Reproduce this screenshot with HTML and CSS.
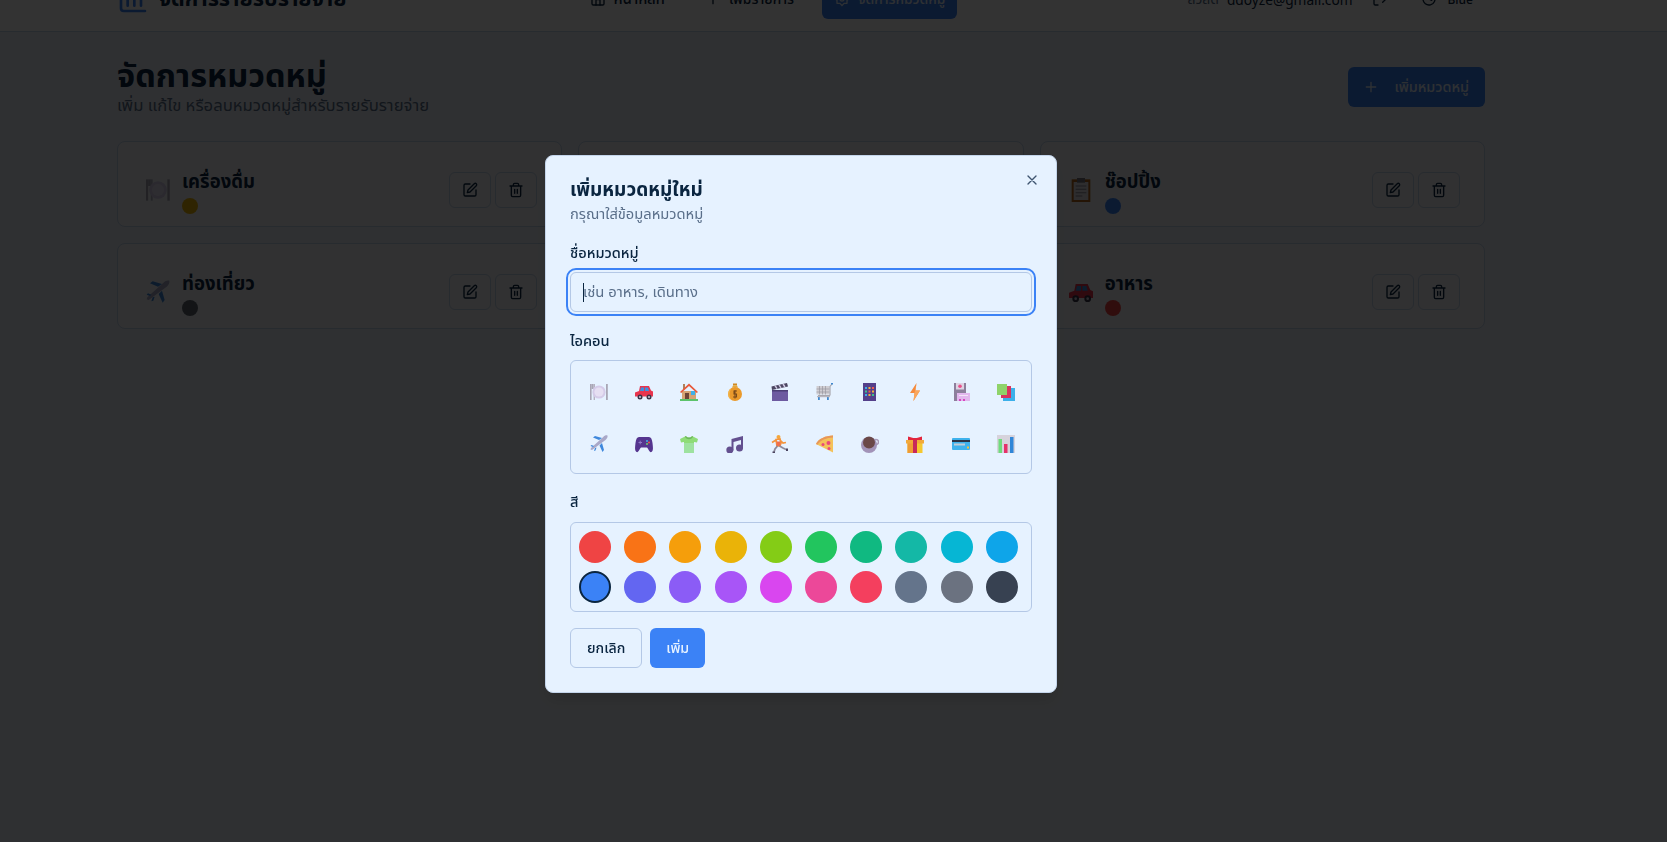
FILE: index.html
```html
<!DOCTYPE html>
<html lang="th">
<head>
    <meta charset="UTF-8">
    <meta name="viewport" content="width=device-width, initial-scale=1.0">
    <title>จัดการหมวดหมู่</title>
    <link rel="stylesheet" href="styles.css">
</head>
<body>

<!-- emoji set, reused in the cards and in the picker -->
<svg class="sprites" xmlns="http://www.w3.org/2000/svg">
    <symbol id="e-plate" viewBox="0 0 18 18">
        <rect x="0" y="1" width="1.6" height="16" fill="#a9a6b5"/><rect x="1.6" y="1" width="2" height="5" fill="#a9a6b5"/><rect x="3.6" y="1" width="1.4" height="16" fill="#b5b2c0"/>
        <rect x="16" y="1" width="1.8" height="16" fill="#a9a6b5"/>
        <circle cx="9" cy="9" r="6.6" fill="#d5cbe8"/><circle cx="9" cy="9" r="4.6" fill="#e6dff2"/>
    </symbol>
    <symbol id="e-car" viewBox="0 0 18 18">
        <path d="M5 3h9l2 4.500 2 1v5H0v-4l4-1.500z" fill="#e8344e"/>
        <path d="M6 4.500h3V8H5zM10 4.500h3L14 8h-4z" fill="#3d8fe0"/>
        <circle cx="5" cy="14" r="2.500" fill="#3a3248"/><circle cx="14" cy="14" r="2.500" fill="#3a3248"/><circle cx="5" cy="14" r="1" fill="#cfcad8"/><circle cx="14" cy="14" r="1" fill="#cfcad8"/>
    </symbol>
    <symbol id="e-house" viewBox="0 0 18 18">
        <rect x="3" y="1" width="2" height="5" fill="#b0805a"/>
        <rect x="2" y="8" width="14" height="8.500" fill="#d5a373"/>
        <path d="M9 0.500l9 8.500-1.200 1L9 3 1.200 10 0 9z" fill="#e8583a"/>
        <rect x="5" y="10" width="4" height="6.500" fill="#6d4336"/><rect x="11" y="8" width="4" height="4" fill="#3fb0e8"/>
        <rect x="0" y="16" width="18" height="2" fill="#5cc36b"/>
    </symbol>
    <symbol id="e-bag" viewBox="0 0 18 18">
        <rect x="7" y="0.500" width="4" height="2" fill="#d08a20"/><path d="M7 2.500h4l1 2H6z" fill="#e5a83a"/>
        <circle cx="9" cy="11" r="7" fill="#ea9a2c"/><path d="M4 6c-2.500 3-2.500 8 1 10.500-2-3-2-7 0-10.500z" fill="#f3b64a"/>
        <path d="M11 8H8v3h2.500v3H7M9 7v8.500" fill="none" stroke="#7a4a1a" stroke-width="1.100"/>
    </symbol>
    <symbol id="e-clap" viewBox="0 0 18 18">
        <rect x="1" y="7" width="16" height="11" fill="#6d5aa0"/><rect x="1" y="7" width="16" height="1.500" fill="#4b3d74"/>
        <path d="M0.500 3.500L16 0l1 3.500L1 7z" fill="#4b4560"/><path d="M4 2.700l2 3M8 1.800l2 3M12 1l2 3" stroke="#cfc8e2" stroke-width="1.500"/>
    </symbol>
    <symbol id="e-cart" viewBox="0 0 18 18">
        <rect x="0.500" y="3" width="13" height="8.500" fill="#cfcdd2"/><path d="M3.500 3v8.500M6.500 3v8.500M9.500 3v8.500M0.500 6h13M0.500 9h13" stroke="#9a98a0" stroke-width="0.700"/>
        <path d="M14 12.500H2M14 12.500V3.500L16 1" fill="none" stroke="#a9a7ae" stroke-width="1.200"/>
        <rect x="15" y="0" width="2" height="1.500" fill="#3f88cf"/><rect x="2" y="14" width="1.800" height="3" fill="#3f88cf"/><rect x="11" y="14" width="1.800" height="3" fill="#3f88cf"/>
        <rect x="1" y="13" width="13" height="1.200" fill="#b8b6bd"/>
    </symbol>
    <symbol id="e-calc" viewBox="0 0 18 18">
        <rect x="2" y="0" width="13" height="18" fill="#54408a"/>
        <g fill="#3ab0e8"><rect x="4" y="4" width="2" height="2"/><rect x="4" y="11" width="2" height="2"/></g>
        <g fill="#f2b23a"><rect x="7.500" y="4" width="2" height="2"/><rect x="11" y="7.500" width="2" height="2"/><rect x="7.500" y="11" width="2" height="2"/></g>
        <g fill="#ef5b4a"><rect x="11" y="4" width="2" height="2"/><rect x="7.500" y="7.500" width="2" height="2"/></g>
        <g fill="#3bc48a"><rect x="4" y="7.500" width="2" height="2"/><rect x="11" y="11" width="2" height="2"/></g>
    </symbol>
    <symbol id="e-bolt" viewBox="0 0 18 18">
        <path d="M10.500 0L4 10h4.500L7.500 18 14 7.500H9.500z" fill="#f58a3c"/><path d="M10.500 0L9.500 7.500H14L7.500 18l1-8z" fill="#f9a65c"/>
    </symbol>
    <symbol id="e-disk" viewBox="0 0 18 18">
        <rect x="2" y="0" width="12" height="18" fill="#8d7f9c"/><rect x="4" y="0" width="8" height="6.500" fill="#ddd4e4"/>
        <circle cx="8" cy="3.200" r="1.800" fill="#ea4f8a"/>
        <rect x="5" y="10" width="13" height="8" fill="#e2b7ee"/><rect x="7" y="12" width="9" height="1" fill="#f3e3f7"/>
        <g fill="#d648c0"><rect x="7" y="16" width="2" height="2"/><rect x="11" y="16" width="2" height="2"/></g>
    </symbol>
    <symbol id="e-books" viewBox="0 0 18 18">
        <rect x="6" y="5" width="12" height="13" fill="#3bb0ea"/><rect x="4" y="3" width="10" height="12" fill="#d9345f"/><rect x="0" y="1" width="10" height="11" fill="#8fd36a"/>
    </symbol>
    <symbol id="e-plane" viewBox="0 0 18 18">
        <path d="M17.500 0.500c-1.500-.5-3 .2-4 1.200L1 13l-.5 1.500L2 15 15.500 5c1.200-1 2.500-3 2-4.500z" fill="#a9a8c8"/>
        <path d="M9 5L3 2.500 5 1l7 2zM12 8l2 7-1.500 2-3-6.500z" fill="#3f88dc"/>
        <path d="M3 12l-2.500-1L1.500 10 4 11zM5 13l-1 3 1.500-.5 1-3z" fill="#3f88dc"/>
    </symbol>
    <symbol id="e-pad" viewBox="0 0 18 18">
        <path d="M4 2h10c2 0 3 2 3.500 6s1 8-1 9-3-3-4.500-4.500H6C4.500 14 3.500 18 1.500 17S0 12 .5 8 2 2 4 2z" fill="#55358f"/>
        <circle cx="12" cy="6" r="1" fill="#3ab0e8"/><circle cx="14" cy="7.500" r="1" fill="#ef5b4a"/><circle cx="12" cy="9" r="1" fill="#6cd06a"/>
        <path d="M3.500 7.500h3.500M5.200 5.700v3.600" stroke="#8f7bc6" stroke-width="1"/>
    </symbol>
    <symbol id="e-shirt" viewBox="0 0 18 18">
        <path d="M6 1L0 4l1 3.500 3-.5v11h10V7l3 .5L18 4l-6-3c-1 2-5 2-6 0z" fill="#8fdc78"/>
        <rect x="4" y="8" width="10" height="10" fill="#9ee2a0"/><path d="M6 1c1 2 5 2 6 0l1 .5C12 5 6 5 5 1.500z" fill="#6db85a"/>
    </symbol>
    <symbol id="e-music" viewBox="0 0 18 18">
        <path d="M5.500 4L17 1v12.500h-2V5L7.500 7v8.500h-2z" fill="#63508f"/>
        <circle cx="3.800" cy="15" r="3.500" fill="#63508f"/><circle cx="13.500" cy="13" r="3.500" fill="#63508f"/>
    </symbol>
    <symbol id="e-run" viewBox="0 0 18 18">
        <circle cx="7.500" cy="2" r="2" fill="#f4a73c"/>
        <path d="M5 4.500L9 4l1 4-1 3H6zM5 5L1 7.500M9 5l3 3 3-.5" fill="none" stroke="#f4953c" stroke-width="1.700"/>
        <rect x="5.500" y="6.500" width="4" height="4.500" fill="#f0704c"/>
        <path d="M6.500 11L4 14l-1 3M8.500 11l3.500 2 3 1.500" fill="none" stroke="#8d8a9a" stroke-width="1.800"/>
        <rect x="1.500" y="16.500" width="2.500" height="1.500" fill="#4b4560"/><rect x="15" y="13.500" width="2" height="2.500" fill="#4b4560"/>
    </symbol>
    <symbol id="e-pizza" viewBox="0 0 18 18">
        <path d="M17 0.500v17L0 9C2 4 10 .5 17 .5z" fill="#f4c25a"/><path d="M17 0.500C10 .5 2 4 0 9l1.500.8C4 5.500 11 2.500 17 2.500z" fill="#e8965a"/>
        <g fill="#ea4a78"><circle cx="12.500" cy="8" r="2"/><circle cx="7" cy="9.500" r="1.500"/><circle cx="13" cy="13.500" r="1.500"/></g>
    </symbol>
    <symbol id="e-coffee" viewBox="0 0 18 18">
        <circle cx="15" cy="7" r="2.500" fill="none" stroke="#a99bb8" stroke-width="1.400"/>
        <circle cx="8" cy="10" r="8" fill="#a293b8"/><circle cx="8" cy="7.500" r="6" fill="#6a4848"/>
    </symbol>
    <symbol id="e-gift" viewBox="0 0 18 18">
        <rect x="1.500" y="5" width="15" height="13" fill="#f5c82f"/><rect x="1.500" y="5" width="6" height="13" fill="#ef9c34"/>
        <rect x="0" y="5" width="18" height="3.500" fill="#f2a93a"/>
        <rect x="7" y="3" width="4" height="15" fill="#c8285a"/>
        <path d="M2 5V1.500l7 2 7-2V5z" fill="#e3263c"/>
    </symbol>
    <symbol id="e-card" viewBox="0 0 18 18">
        <rect x="0" y="3" width="18" height="12" rx="1" fill="#3fb2ec"/><rect x="0" y="5" width="18" height="2" fill="#2b3345"/>
        <rect x="2" y="8.500" width="11" height="2" fill="#c2ccd6"/><rect x="15" y="11.500" width="2" height="2" fill="#f4c23a"/>
    </symbol>
    <symbol id="e-chart" viewBox="0 0 18 18">
        <rect x="0" y="0" width="18" height="18" fill="#d6d3dc"/><rect x="1.500" y="4" width="3.500" height="14" fill="#6fdc7c"/>
        <rect x="7" y="9" width="3.500" height="9" fill="#e6316a"/><rect x="13" y="2" width="3.500" height="16" fill="#2f86d8"/>
    </symbol>
    <symbol id="e-clip" viewBox="0 0 18 18">
        <rect x="2" y="1" width="14" height="17" fill="#b5651d"/><rect x="3.500" y="3" width="11" height="13.500" fill="#e4e2e6"/>
        <rect x="6" y="0" width="6" height="3.500" fill="#78757f"/>
        <path d="M5 6h8M5 8.500h8M5 11h8M5 13.500h5" stroke="#8d8a94" stroke-width="0.800"/>
    </symbol>
    <symbol id="i-edit" viewBox="0 0 24 24">
        <path d="M12 3H5a2 2 0 0 0-2 2v14a2 2 0 0 0 2 2h14a2 2 0 0 0 2-2v-7"/>
        <path d="M18.400 2.600a2.100 2.100 0 0 1 3 3L12 15l-4 1 1-4z"/>
    </symbol>
    <symbol id="i-trash" viewBox="0 0 24 24">
        <path d="M3 6h18M19 6v14a2 2 0 0 1-2 2H7a2 2 0 0 1-2-2V6M8 6V4a2 2 0 0 1 2-2h4a2 2 0 0 1 2 2v2M10 11v6M14 11v6"/>
    </symbol>
    <symbol id="i-plus" viewBox="0 0 24 24"><path d="M5 12h14M12 5v14"/></symbol>
</svg>

<div class="app">
    <header class="topbar">
        <div class="topbar-inner">
            <div class="brand">
                <svg class="brand-icon" viewBox="0 0 24 24"><path d="M3 3v16a2 2 0 0 0 2 2h16M8 17v-5M13 17V5M18 17v-8"/></svg>
                <span class="brand-name">จัดการรายรับรายจ่าย</span>
            </div>
            <nav class="nav">
                <a class="nav-link nav-home">
                    <svg class="icon" viewBox="0 0 24 24"><rect x="3" y="3" width="18" height="18" rx="2"/><path d="M9 21v-8h6v8M3 9h18"/></svg>
                    หน้าหลัก
                </a>
                <a class="nav-link">
                    <svg class="icon"><use href="#i-plus"/></svg>
                    เพิ่มรายการ
                </a>
                <a class="nav-link active">
                    <svg class="icon" viewBox="0 0 24 24"><circle cx="12" cy="12" r="3"/><path d="M12 2l3 3.500h4.500V10L22 12l-2.500 2v4.500H15L12 22l-3-3.500H4.500V14L2 12l2.500-2V5.500H9z"/></svg>
                    จัดการหมวดหมู่
                </a>
            </nav>
            <div class="user">
                <span class="hello">สวัสดี</span>
                <span class="email">ddoyze@gmail.com</span>
                <svg class="icon logout" viewBox="0 0 24 24"><path d="M9 21H5a2 2 0 0 1-2-2V5a2 2 0 0 1 2-2h4M16 17l5-5-5-5M21 12H9"/></svg>
                <svg class="icon theme" viewBox="0 0 24 24"><path d="M3 12a9 9 0 1 0 3-6.700L3 8M3 3v5h5M12 7v5l4 2"/></svg>
                <span class="theme-name">Blue</span>
            </div>
        </div>
    </header>

    <main class="content">
        <div class="page-head">
            <div>
                <h1>จัดการหมวดหมู่</h1>
                <p class="subtitle">เพิ่ม แก้ไข หรือลบหมวดหมู่สำหรับรายรับรายจ่าย</p>
            </div>
            <button class="btn-add">
                <svg class="icon"><use href="#i-plus"/></svg>
                เพิ่มหมวดหมู่
            </button>
        </div>

        <div class="cards">
            <div class="card">
                <svg class="card-emoji"><use href="#e-plate"/></svg>
                <div class="card-text"><h3>เครื่องดื่ม</h3><span class="dot dot-yellow"></span></div>
                <div class="card-actions">
                    <button class="btn-icon"><svg class="icon"><use href="#i-edit"/></svg></button>
                    <button class="btn-icon"><svg class="icon"><use href="#i-trash"/></svg></button>
                </div>
            </div>
            <div class="card"></div>
            <div class="card">
                <svg class="card-emoji"><use href="#e-clip"/></svg>
                <div class="card-text"><h3>ช๊อปปิ้ง</h3><span class="dot dot-blue"></span></div>
                <div class="card-actions">
                    <button class="btn-icon"><svg class="icon"><use href="#i-edit"/></svg></button>
                    <button class="btn-icon"><svg class="icon"><use href="#i-trash"/></svg></button>
                </div>
            </div>
            <div class="card">
                <svg class="card-emoji"><use href="#e-plane"/></svg>
                <div class="card-text"><h3>ท่องเที่ยว</h3><span class="dot dot-black"></span></div>
                <div class="card-actions">
                    <button class="btn-icon"><svg class="icon"><use href="#i-edit"/></svg></button>
                    <button class="btn-icon"><svg class="icon"><use href="#i-trash"/></svg></button>
                </div>
            </div>
            <div class="card"></div>
            <div class="card">
                <svg class="card-emoji"><use href="#e-car"/></svg>
                <div class="card-text"><h3>อาหาร</h3><span class="dot dot-red"></span></div>
                <div class="card-actions">
                    <button class="btn-icon"><svg class="icon"><use href="#i-edit"/></svg></button>
                    <button class="btn-icon"><svg class="icon"><use href="#i-trash"/></svg></button>
                </div>
            </div>
        </div>
    </main>
</div>

<div class="overlay"></div>

<div class="modal">
    <button class="modal-close">
        <svg class="icon" viewBox="0 0 24 24"><path d="M18 6L6 18M6 6l12 12"/></svg>
    </button>
    <h2>เพิ่มหมวดหมู่ใหม่</h2>
    <p class="modal-desc">กรุณาใส่ข้อมูลหมวดหมู่</p>

    <label class="field-label label-name">ชื่อหมวดหมู่</label>
    <div class="input-box"><span class="caret"></span><span class="placeholder">เช่น อาหาร, เดินทาง</span></div>

    <label class="field-label label-icon">ไอคอน</label>
    <div class="icon-grid">
        <button class="icon-cell"><svg><use href="#e-plate"/></svg></button>
        <button class="icon-cell"><svg><use href="#e-car"/></svg></button>
        <button class="icon-cell"><svg><use href="#e-house"/></svg></button>
        <button class="icon-cell"><svg><use href="#e-bag"/></svg></button>
        <button class="icon-cell"><svg><use href="#e-clap"/></svg></button>
        <button class="icon-cell"><svg><use href="#e-cart"/></svg></button>
        <button class="icon-cell"><svg><use href="#e-calc"/></svg></button>
        <button class="icon-cell"><svg><use href="#e-bolt"/></svg></button>
        <button class="icon-cell"><svg><use href="#e-disk"/></svg></button>
        <button class="icon-cell"><svg><use href="#e-books"/></svg></button>
        <button class="icon-cell"><svg><use href="#e-plane"/></svg></button>
        <button class="icon-cell"><svg><use href="#e-pad"/></svg></button>
        <button class="icon-cell"><svg><use href="#e-shirt"/></svg></button>
        <button class="icon-cell"><svg><use href="#e-music"/></svg></button>
        <button class="icon-cell"><svg><use href="#e-run"/></svg></button>
        <button class="icon-cell"><svg><use href="#e-pizza"/></svg></button>
        <button class="icon-cell"><svg><use href="#e-coffee"/></svg></button>
        <button class="icon-cell"><svg><use href="#e-gift"/></svg></button>
        <button class="icon-cell"><svg><use href="#e-card"/></svg></button>
        <button class="icon-cell"><svg><use href="#e-chart"/></svg></button>
    </div>

    <label class="field-label label-color">สี</label>
    <div class="color-grid">
        <span class="swatch c-red"></span>
        <span class="swatch c-orange"></span>
        <span class="swatch c-amber"></span>
        <span class="swatch c-yellow"></span>
        <span class="swatch c-lime"></span>
        <span class="swatch c-green"></span>
        <span class="swatch c-emerald"></span>
        <span class="swatch c-teal"></span>
        <span class="swatch c-cyan"></span>
        <span class="swatch c-sky"></span>
        <span class="swatch c-blue selected"></span>
        <span class="swatch c-indigo"></span>
        <span class="swatch c-violet"></span>
        <span class="swatch c-purple"></span>
        <span class="swatch c-fuchsia"></span>
        <span class="swatch c-pink"></span>
        <span class="swatch c-rose"></span>
        <span class="swatch c-slate"></span>
        <span class="swatch c-gray"></span>
        <span class="swatch c-dark"></span>
    </div>

    <div class="modal-actions">
        <button class="btn-cancel">ยกเลิก</button>
        <button class="btn-save">เพิ่ม</button>
    </div>
</div>

</body>
</html>
```

FILE: styles.css
```css
* {
    box-sizing: border-box;
}
html, body {
    height: 100%;
    overflow: hidden;
}
body {
    font-family: "Noto Sans", "Noto Sans Thai", "Open Sans", sans-serif;
    background-color: #ecf1f8;
    color: #0a2540;
    margin: 0;
    padding: 0;
}
h1, h2, h3, p {
    margin: 0;
}
button {
    font-family: inherit;
    color: inherit;
    background: none;
    border: none;
    padding: 0;
}
.sprites {
    display: none;
}
.icon {
    width: 16px;
    height: 16px;
    flex-shrink: 0;
    fill: none;
    stroke: currentColor;
    stroke-width: 2;
    stroke-linecap: round;
    stroke-linejoin: round;
}

/* page behind the dialog, scrolled up a little */
.app {
    margin-top: -33px;
}
.topbar {
    height: 65px;
    background-color: #ffffff;
    border-bottom: 1px solid #c3d4ea;
}
.topbar-inner {
    width: 1368px;
    height: 64px;
    margin-left: 117px;
    display: flex;
    align-items: center;
}
.brand {
    display: flex;
    align-items: center;
    gap: 10px;
}
.brand-icon {
    width: 32px;
    height: 32px;
    fill: none;
    stroke: #3b82f6;
    stroke-width: 2;
    stroke-linecap: round;
    stroke-linejoin: round;
}
.brand-name {
    font-size: 21.6px;
    font-weight: 700;
}
.nav {
    display: flex;
    gap: 16px;
    margin-left: 231px;
}
.nav-link {
    display: flex;
    align-items: center;
    gap: 8px;
    height: 40px;
    padding: 0 12px;
    font-size: 14px;
    font-weight: 500;
    border-radius: 6px;
}
.nav-home {
    font-size: 15px;
}
.nav-link.active {
    background-color: #3b82f6;
    color: #e6f2ff;
}
.user {
    margin-left: auto;
    padding-right: 12px;
    display: flex;
    align-items: center;
    font-size: 13.7px;
}
.hello {
    font-size: 14px;
    color: #5a6f8a;
    margin-right: 8px;
}
.logout {
    margin-left: 20px;
}
.theme {
    margin-left: 33px;
    margin-right: 10px;
}
.theme-name {
    font-size: 12px;
    font-weight: 500;
}
.content {
    width: 1368px;
    margin-left: 117px;
    padding-top: 24px;
}
.page-head {
    display: flex;
    justify-content: space-between;
    align-items: flex-start;
    margin-bottom: 25px;
}
h1 {
    font-size: 32.5px;
    line-height: 38px;
    font-weight: 700;
}
.subtitle {
    font-size: 16.7px;
    line-height: 22px;
    color: #5a6f8a;
}
.btn-add {
    display: flex;
    align-items: center;
    gap: 15px;
    height: 40px;
    margin-top: 11px;
    padding: 0 16px 0 15px;
    font-size: 14.4px;
    font-weight: 500;
    color: #e6f2ff;
    background-color: #3b82f6;
    border-radius: 6px;
}
.cards {
    display: grid;
    grid-template-columns: repeat(3, 1fr);
    gap: 16px;
}
.card {
    height: 86px;
    padding: 12px 24px;
    display: flex;
    align-items: center;
    background-color: #f2f6fb;
    border: 1px solid #c3d4ea;
    border-radius: 8px;
}
.card-emoji {
    width: 24px;
    height: 24px;
    margin-top: 12px;
    margin-left: 4px;
    margin-right: 12px;
    flex-shrink: 0;
}
.card-text {
    flex: 1;
    align-self: flex-start;
    margin-top: 13px;
}
.card-text h3 {
    font-size: 18.5px;
    line-height: 28px;
    font-weight: 700;
}
.dot {
    display: block;
    width: 16px;
    height: 16px;
    margin-top: 3px;
    border-radius: 50%;
}
.dot-yellow { background-color: #eab308; }
.dot-blue { background-color: #3b82f6; }
.dot-black { background-color: #5f6570; }
.dot-red { background-color: #ef4444; }
.card-actions {
    display: flex;
    gap: 4px;
    margin-top: 12px;
}
.btn-icon {
    width: 42px;
    height: 36px;
    display: flex;
    align-items: center;
    justify-content: center;
    border: 1px solid #c3d4ea;
    border-radius: 6px;
}

/* dialog */
.overlay {
    position: fixed;
    top: 0;
    left: 0;
    right: 0;
    bottom: 0;
    background-color: rgba(0, 0, 0, 0.8);
}
.modal {
    position: fixed;
    top: 155px;
    left: 545px;
    width: 512px;
    padding: 24px;
    background-color: #e6f2ff;
    border: 1px solid #c3d4ea;
    border-radius: 8px;
    box-shadow: 0 10px 15px rgba(0, 0, 0, 0.1);
}
.modal-close {
    position: absolute;
    top: 16px;
    right: 16px;
    width: 16px;
    height: 16px;
    color: #3f5570;
}
.modal h2 {
    font-size: 19px;
    line-height: 24px;
    font-weight: 700;
    margin-top: -3px;
}
.modal-desc {
    font-size: 14.7px;
    line-height: 20px;
    margin-top: 2px;
    color: #5a6f8a;
}
.field-label {
    display: block;
    font-size: 14.6px;
    line-height: 20px;
    font-weight: 500;
}
.label-name {
    margin-top: 19px;
}
.input-box {
    height: 40px;
    margin-top: 10px;
    padding: 0 12px;
    display: flex;
    align-items: center;
    font-size: 14.8px;
    border: 1px solid #b4c8e6;
    border-radius: 6px;
    outline: 2px solid #3b82f6;
    outline-offset: 2px;
}
.caret {
    width: 1px;
    height: 19px;
    margin-right: -1px;
    background-color: #0a2540;
}
.placeholder {
    color: #5a6f8a;
}
.label-icon {
    margin-top: 18px;
}
.icon-grid, .color-grid {
    padding: 8px;
    display: grid;
    grid-template-columns: repeat(10, 1fr);
    gap: 8px;
    border: 1px solid #b4c8e6;
    border-radius: 6px;
}
.icon-grid {
    margin-top: 10px;
}
.color-grid {
    margin-top: 11px;
}
.icon-cell {
    height: 44px;
    padding: 2px 0 0 3px;
    display: flex;
    align-items: center;
    justify-content: center;
}
.icon-cell svg {
    width: 18px;
    height: 18px;
}
.label-color {
    margin-top: 17px;
}
.swatch {
    display: block;
    width: 32px;
    height: 32px;
    border-radius: 50%;
}
.swatch.selected {
    border: 2px solid #0a2540;
}
.c-red { background-color: #ef4444; }
.c-orange { background-color: #f97316; }
.c-amber { background-color: #f59e0b; }
.c-yellow { background-color: #eab308; }
.c-lime { background-color: #84cc16; }
.c-green { background-color: #22c55e; }
.c-emerald { background-color: #10b981; }
.c-teal { background-color: #14b8a6; }
.c-cyan { background-color: #06b6d4; }
.c-sky { background-color: #0ea5e9; }
.c-blue { background-color: #3b82f6; }
.c-indigo { background-color: #6366f1; }
.c-violet { background-color: #8b5cf6; }
.c-purple { background-color: #a855f7; }
.c-fuchsia { background-color: #d946ef; }
.c-pink { background-color: #ec4899; }
.c-rose { background-color: #f43f5e; }
.c-slate { background-color: #64748b; }
.c-gray { background-color: #6b7280; }
.c-dark { background-color: #374151; }
.modal-actions {
    display: flex;
    gap: 8px;
    margin-top: 16px;
}
.btn-cancel, .btn-save {
    height: 40px;
    padding: 0 16px;
    font-size: 14.2px;
    font-weight: 500;
    border-radius: 6px;
}
.btn-cancel {
    border: 1px solid #b4c8e6;
}
.btn-save {
    color: #e6f2ff;
    background-color: #3b82f6;
}
```
